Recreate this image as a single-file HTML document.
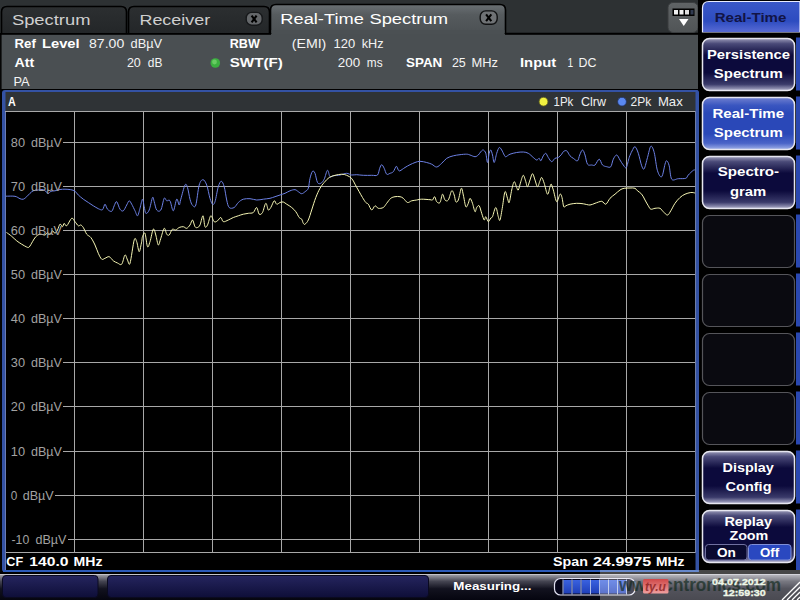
<!DOCTYPE html>
<html><head><meta charset="utf-8">
<style>
html,body{margin:0;padding:0;background:#000;width:800px;height:600px;overflow:hidden}
svg{display:block}
text{font-family:"Liberation Sans",sans-serif;white-space:pre}
</style></head><body>
<svg width="800" height="600" viewBox="0 0 800 600">
<defs>
 <linearGradient id="gTab" x1="0" y1="0" x2="0" y2="1">
  <stop offset="0" stop-color="#2c2f31"/><stop offset="1" stop-color="#232628"/>
 </linearGradient>
 <linearGradient id="gAct" x1="0" y1="0" x2="0" y2="1">
  <stop offset="0" stop-color="#6a7074"/><stop offset="0.35" stop-color="#565b5e"/><stop offset="1" stop-color="#4b5053"/>
 </linearGradient>
 <linearGradient id="gMenu" x1="0" y1="0" x2="0" y2="1">
  <stop offset="0" stop-color="#606466"/><stop offset="1" stop-color="#505456"/>
 </linearGradient>
 <linearGradient id="gNavy" x1="0" y1="0" x2="0" y2="1">
  <stop offset="0" stop-color="#9a9ab8"/><stop offset="0.1" stop-color="#4a4a78"/><stop offset="0.32" stop-color="#0c0a3c"/>
  <stop offset="0.66" stop-color="#0c0a3c"/><stop offset="0.88" stop-color="#3a3a6a"/><stop offset="1" stop-color="#b0b0cc"/>
 </linearGradient>
 <linearGradient id="gBlue" x1="0" y1="0" x2="0" y2="1">
  <stop offset="0" stop-color="#7080d0"/><stop offset="0.15" stop-color="#3a56c0"/><stop offset="0.3" stop-color="#2a48b8"/>
  <stop offset="0.7" stop-color="#2a48b8"/><stop offset="0.88" stop-color="#4a64c8"/><stop offset="1" stop-color="#a0b0e8"/>
 </linearGradient>
 <linearGradient id="gTitle" x1="0" y1="0" x2="0" y2="1">
  <stop offset="0" stop-color="#3a58c8"/><stop offset="0.6" stop-color="#2d4cc0"/><stop offset="1" stop-color="#6070d8"/>
 </linearGradient>
 <linearGradient id="gStatus" x1="0" y1="0" x2="0" y2="1">
  <stop offset="0" stop-color="#9a9aa2"/><stop offset="0.25" stop-color="#454552"/><stop offset="0.55" stop-color="#12121f"/><stop offset="1" stop-color="#05050f"/>
 </linearGradient>
 <linearGradient id="gBox" x1="0" y1="0" x2="0" y2="1">
  <stop offset="0" stop-color="#25255e"/><stop offset="1" stop-color="#0e0e38"/>
 </linearGradient>
 <linearGradient id="gProg" x1="0" y1="0" x2="0" y2="1">
  <stop offset="0" stop-color="#3a62e0"/><stop offset="1" stop-color="#1f3fb8"/>
 </linearGradient>
 <linearGradient id="gRed" x1="0" y1="0" x2="0" y2="1">
  <stop offset="0" stop-color="#d04848"/><stop offset="1" stop-color="#f0a0a0"/>
 </linearGradient>
</defs>

<!-- base -->
<rect x="0" y="0" width="800" height="600" fill="#000"/>
<rect x="0" y="0" width="698" height="34" fill="#2d3133"/>

<!-- tabs -->
<path d="M1.5,34 L1.5,12 Q1.5,6.5 7,6.5 L121,6.5 Q126.5,6.5 126.5,12 L126.5,34 Z" fill="url(#gTab)" stroke="#000" stroke-width="1.6"/>
<path d="M128.5,34 L128.5,12 Q128.5,6.5 134,6.5 L264,6.5 Q269.5,6.5 269.5,12 L269.5,34 Z" fill="url(#gTab)" stroke="#000" stroke-width="1.6"/>
<rect x="246.2" y="12.4" width="16" height="12.8" rx="5.5" fill="#64676a" stroke="#16181a" stroke-width="1.4"/>
<path d="M251.6,15.6 L256.6,22.4 M256.6,15.6 L251.6,22.4" stroke="#000" stroke-width="2.1" fill="none"/>
<line x1="506" y1="33.5" x2="698" y2="33.5" stroke="#000" stroke-width="1.6"/>
<path d="M270.5,34 L270.5,10 Q270.5,4.5 276,4.5 L500,4.5 Q505.5,4.5 505.5,10 L505.5,34 Z" fill="url(#gAct)" stroke="#000" stroke-width="1.6"/>
<rect x="271.5" y="30" width="233" height="6" fill="#4b5053"/>
<rect x="480.2" y="10.9" width="17" height="13.4" rx="5.5" fill="#6f7275" stroke="#101112" stroke-width="1.4"/>
<path d="M486.1,14.3 L491.3,21.1 M491.3,14.3 L486.1,21.1" stroke="#000" stroke-width="2.1" fill="none"/>

<!-- menu button -->
<rect x="668" y="2.5" width="30" height="30" rx="5" fill="url(#gMenu)" stroke="#3a3d3f" stroke-width="1"/>
<rect x="672.5" y="8.5" width="22" height="7.5" fill="#000"/>
<rect x="674" y="10" width="4" height="4.5" fill="#f0f0f0"/>
<rect x="679.5" y="10" width="4" height="4.5" fill="#f0f0f0"/>
<rect x="685" y="10" width="4" height="4.5" fill="#e0e0e0"/>
<rect x="690.5" y="10" width="3" height="4.5" fill="#303a50"/>
<path d="M679,19 L688.5,19 L683.75,26 Z" fill="#fff"/>

<!-- info panel -->
<rect x="0" y="34" width="698" height="55" fill="#4a4f52"/>
<rect x="0" y="33" width="1.6" height="545" fill="#050505"/>
<rect x="0" y="33" width="271" height="1.8" fill="#000"/>
<rect x="505" y="33" width="193" height="1.8" fill="#000"/>
<circle cx="215.3" cy="63" r="4.8" fill="#3cb040"/>
<circle cx="214.5" cy="62" r="2.4" fill="#7ad870" opacity="0.7"/>

<!-- graph frame -->
<rect x="2" y="90" width="697" height="482" rx="3" fill="#3452a4"/>
<rect x="5.5" y="92" width="690.5" height="19.5" fill="#2f3336"/>
<rect x="5.5" y="111" width="690.5" height="459" fill="#000"/>
<circle cx="543.5" cy="101.7" r="4.4" fill="#f0f040" stroke="#606020" stroke-width="0.8"/>
<circle cx="622" cy="101.7" r="4.4" fill="#5a88f0" stroke="#203060" stroke-width="0.8"/>

<!-- grid -->
<g stroke="#a8a8a8" stroke-width="1" fill="none">
<rect x="5.5" y="111.5" width="690" height="441"/>
<line x1="5.5" y1="112" x2="5.5" y2="570" stroke="#6a7cb4"/>
<line x1="74.5" y1="111" x2="74.5" y2="552" />
<line x1="143.5" y1="111" x2="143.5" y2="552" />
<line x1="212.5" y1="111" x2="212.5" y2="552" />
<line x1="281.5" y1="111" x2="281.5" y2="552" />
<line x1="350.5" y1="111" x2="350.5" y2="552" />
<line x1="419.5" y1="111" x2="419.5" y2="552" />
<line x1="488.5" y1="111" x2="488.5" y2="552" />
<line x1="557.5" y1="111" x2="557.5" y2="552" />
<line x1="626.5" y1="111" x2="626.5" y2="552" />
<line x1="63" y1="142.5" x2="696" y2="142.5" />
<line x1="63" y1="186.5" x2="696" y2="186.5" />
<line x1="63" y1="230.5" x2="696" y2="230.5" />
<line x1="63" y1="274.5" x2="696" y2="274.5" />
<line x1="63" y1="318.5" x2="696" y2="318.5" />
<line x1="63" y1="362.5" x2="696" y2="362.5" />
<line x1="63" y1="406.5" x2="696" y2="406.5" />
<line x1="63" y1="451.5" x2="696" y2="451.5" />
<line x1="55" y1="495.5" x2="696" y2="495.5" />
<line x1="68" y1="539.5" x2="696" y2="539.5" />
</g>

<!-- traces -->
<path d="M6.0,196.2 C7.5,196.2 12.7,195.9 15.0,196.3 C17.3,196.7 18.6,198.2 20.0,198.7 C21.4,199.2 22.2,199.5 23.3,199.2 C24.4,198.9 25.6,197.7 26.7,196.7 C27.8,195.7 28.9,194.3 30.0,193.3 C31.1,192.3 31.9,191.4 33.3,190.8 C34.7,190.2 36.6,190.2 38.3,190.0 C40.0,189.8 41.6,189.1 43.3,189.7 C45.0,190.2 47.0,193.0 48.3,193.3 C49.5,193.6 49.7,191.7 50.8,191.3 C51.9,190.9 53.5,191.1 55.0,190.8 C56.5,190.5 58.3,189.8 60.0,189.5 C61.7,189.2 63.2,189.2 65.0,189.2 C66.8,189.2 69.1,189.4 70.8,189.7 C72.5,190.0 73.8,190.3 75.0,191.2 C76.2,192.1 76.9,193.7 78.3,195.0 C79.7,196.3 81.6,197.9 83.3,199.2 C85.0,200.4 86.6,201.4 88.3,202.5 C90.0,203.6 91.6,204.8 93.3,205.8 C95.0,206.8 96.8,208.0 98.3,208.7 C99.8,209.3 101.4,210.4 102.5,209.7 C103.6,208.9 104.2,204.3 105.0,204.2 C105.8,204.1 106.4,208.0 107.5,209.2 C108.6,210.4 110.6,211.9 111.7,211.3 C112.8,210.7 113.4,207.4 114.2,205.8 C115.0,204.2 115.7,201.1 116.7,201.7 C117.7,202.3 118.9,207.7 120.0,209.2 C121.1,210.7 122.2,211.5 123.3,210.8 C124.4,210.1 125.7,206.7 126.7,205.0 C127.7,203.3 128.4,200.9 129.2,200.8 C130.0,200.7 130.7,202.5 131.7,204.2 C132.7,205.9 134.0,208.9 135.0,210.8 C136.0,212.7 136.7,216.2 137.5,215.8 C138.3,215.4 139.2,211.1 140.0,208.3 C140.8,205.5 141.8,199.5 142.5,199.2 C143.2,198.9 143.6,204.3 144.2,206.7 C144.8,209.0 145.0,212.8 145.8,213.3 C146.6,213.9 148.1,212.6 149.2,210.0 C150.3,207.4 151.7,198.9 152.5,197.5 C153.3,196.1 153.5,199.6 154.2,201.7 C154.9,203.8 155.6,208.6 156.7,210.0 C157.8,211.4 159.6,211.9 160.8,210.0 C162.1,208.1 163.2,199.8 164.2,198.3 C165.2,196.8 165.7,200.4 166.7,200.8 C167.7,201.2 168.9,199.1 170.0,200.8 C171.1,202.5 172.2,211.1 173.3,210.8 C174.4,210.5 175.7,200.2 176.7,199.2 C177.7,198.2 178.5,205.0 179.2,205.0 C179.9,205.0 179.8,202.5 180.8,199.2 C181.8,195.9 183.9,186.9 185.0,185.0 C186.1,183.1 186.7,185.1 187.5,187.5 C188.3,189.9 189.2,196.2 190.0,199.2 C190.8,202.2 191.5,204.3 192.5,205.3 C193.5,206.3 194.7,208.4 195.8,205.0 C196.9,201.6 198.0,189.2 199.2,185.0 C200.4,180.8 201.8,179.7 203.0,179.7 C204.2,179.7 205.5,181.9 206.7,185.0 C207.9,188.1 209.0,195.1 210.0,198.3 C211.0,201.5 211.7,203.6 212.5,204.2 C213.3,204.8 214.0,204.6 215.0,201.7 C216.0,198.8 217.2,190.1 218.3,186.7 C219.4,183.3 220.3,181.3 221.3,181.3 C222.3,181.3 223.3,183.6 224.2,186.7 C225.1,189.8 225.9,196.5 226.7,200.0 C227.5,203.5 227.9,206.2 229.2,207.5 C230.4,208.8 232.7,208.3 234.2,207.5 C235.7,206.7 236.8,203.9 238.3,202.5 C239.8,201.1 241.4,199.8 243.3,199.2 C245.2,198.6 247.8,198.6 250.0,198.7 C252.2,198.8 254.5,199.9 256.7,200.0 C258.9,200.1 261.1,199.5 263.3,199.2 C265.5,198.9 268.1,198.7 270.0,198.3 C271.9,197.9 273.3,197.2 275.0,196.7 C276.7,196.1 278.3,195.6 280.0,195.0 C281.7,194.4 283.3,194.0 285.0,193.3 C286.7,192.6 288.3,191.4 290.0,190.8 C291.7,190.2 293.6,189.5 295.0,189.7 C296.4,189.8 297.2,191.0 298.3,191.7 C299.4,192.4 300.6,193.7 301.7,193.7 C302.8,193.7 303.9,192.6 305.0,191.7 C306.1,190.8 307.5,190.5 308.3,188.3 C309.1,186.1 309.3,181.1 310.0,178.3 C310.7,175.5 311.7,172.1 312.5,171.3 C313.3,170.5 314.2,171.4 315.0,173.3 C315.8,175.2 316.5,180.8 317.5,182.5 C318.5,184.2 319.7,183.9 320.8,183.3 C321.9,182.8 323.1,181.4 324.2,179.2 C325.3,177.0 326.5,170.7 327.5,170.3 C328.5,169.9 329.0,175.8 330.0,176.7 C331.0,177.6 331.6,176.1 333.3,175.8 C335.0,175.5 337.8,175.4 340.0,175.0 C342.2,174.6 344.8,173.3 346.7,173.3 C348.6,173.3 350.0,174.8 351.7,175.0 C353.4,175.2 354.8,174.6 356.7,174.7 C358.6,174.8 360.8,175.2 363.3,175.3 C365.8,175.4 369.3,175.4 371.7,175.3 C374.1,175.2 376.2,176.2 377.5,175.0 C378.8,173.8 379.0,170.0 379.7,168.3 C380.4,166.6 380.9,164.7 381.7,164.7 C382.4,164.7 383.4,166.7 384.2,168.3 C385.0,169.9 385.7,173.4 386.7,174.2 C387.7,175.0 388.9,173.7 390.0,173.3 C391.1,172.9 392.2,172.9 393.3,171.7 C394.4,170.5 395.5,166.6 396.3,166.3 C397.1,166.0 397.7,169.2 398.3,170.0 C398.9,170.8 398.9,171.2 400.0,170.8 C401.1,170.4 403.3,168.5 405.0,167.5 C406.7,166.5 408.3,165.5 410.0,164.7 C411.7,163.9 413.3,163.1 415.0,162.5 C416.7,161.9 418.1,161.3 420.0,161.3 C421.9,161.3 424.8,162.0 426.7,162.5 C428.6,163.0 430.0,163.4 431.7,164.2 C433.4,164.9 435.0,167.2 436.7,167.0 C438.4,166.8 440.0,164.8 441.7,163.3 C443.4,161.9 444.8,159.6 446.7,158.3 C448.6,157.1 451.1,156.4 453.3,155.8 C455.5,155.2 457.8,155.0 460.0,154.7 C462.2,154.4 465.0,154.1 466.7,154.2 C468.4,154.2 468.6,154.6 470.0,155.0 C471.4,155.4 473.6,156.7 475.0,156.7 C476.4,156.7 477.3,155.8 478.3,155.0 C479.3,154.2 480.0,152.5 480.8,151.7 C481.6,150.9 482.5,149.7 483.3,150.0 C484.1,150.3 485.1,151.2 485.8,153.3 C486.5,155.4 486.9,162.5 487.5,162.5 C488.1,162.5 488.6,155.4 489.2,153.3 C489.8,151.2 490.2,149.7 490.8,150.0 C491.4,150.3 491.9,152.9 492.5,155.0 C493.1,157.1 493.5,162.8 494.2,162.5 C494.9,162.2 495.9,155.8 496.7,153.3 C497.5,150.8 498.4,148.1 499.2,147.5 C500.0,146.9 500.9,148.8 501.7,150.0 C502.5,151.2 503.5,153.9 504.2,155.0 C504.9,156.1 504.8,156.8 505.8,156.7 C506.8,156.6 508.2,154.9 510.0,154.2 C511.8,153.5 514.5,152.9 516.7,152.5 C518.9,152.1 521.4,151.9 523.3,152.0 C525.2,152.1 526.6,152.4 528.3,153.3 C530.0,154.2 531.9,156.4 533.3,157.5 C534.7,158.6 535.7,159.9 536.7,160.0 C537.7,160.1 538.5,158.2 539.2,158.3 C539.9,158.4 540.1,161.2 540.8,160.8 C541.5,160.4 542.5,157.1 543.3,155.8 C544.1,154.6 545.0,153.0 545.8,153.3 C546.6,153.6 547.3,156.1 548.3,157.5 C549.3,158.9 550.6,161.6 551.7,161.7 C552.8,161.8 553.9,159.0 555.0,158.3 C556.1,157.6 557.2,158.2 558.3,157.5 C559.4,156.8 560.9,155.2 561.7,154.2 C562.5,153.2 562.5,152.3 563.3,151.7 C564.1,151.1 565.6,150.1 566.7,150.8 C567.8,151.5 568.9,154.6 570.0,155.8 C571.1,157.1 572.0,157.5 573.3,158.3 C574.5,159.1 576.4,161.4 577.5,160.8 C578.6,160.2 578.9,156.8 579.7,155.0 C580.5,153.2 581.6,150.0 582.5,150.0 C583.4,150.0 584.2,152.6 585.0,155.0 C585.8,157.4 586.4,162.5 587.5,164.2 C588.6,165.9 590.5,164.9 591.7,165.0 C593.0,165.1 593.8,166.0 595.0,165.0 C596.2,164.0 598.0,159.2 599.2,159.2 C600.5,159.2 601.2,163.8 602.5,165.0 C603.8,166.2 605.3,166.4 606.7,166.7 C608.1,167.0 609.7,167.9 610.8,166.7 C611.9,165.4 612.3,161.1 613.3,159.2 C614.3,157.2 615.6,154.9 616.7,155.0 C617.8,155.1 618.9,158.3 620.0,160.0 C621.1,161.7 622.2,163.8 623.3,165.0 C624.3,166.2 625.3,168.8 626.3,167.5 C627.3,166.2 628.2,160.2 629.2,157.5 C630.2,154.8 631.0,152.8 632.0,151.0 C633.0,149.2 634.0,146.3 635.0,146.7 C636.0,147.1 637.2,150.1 638.3,153.3 C639.4,156.5 640.7,163.2 641.7,165.8 C642.7,168.4 643.2,170.1 644.2,168.7 C645.2,167.3 646.4,161.2 647.5,157.5 C648.6,153.8 649.7,147.1 650.8,146.3 C651.9,145.5 653.1,148.4 654.2,152.5 C655.3,156.6 656.2,166.8 657.5,170.8 C658.8,174.8 660.5,177.8 661.7,176.7 C663.0,175.6 664.2,166.8 665.0,164.2 C665.8,161.5 666.0,160.5 666.7,160.8 C667.4,161.1 668.4,162.7 669.2,165.8 C670.0,168.9 670.2,177.0 671.7,179.2 C673.2,181.3 675.9,178.8 678.3,178.7 C680.6,178.5 684.1,178.9 685.8,178.3 C687.5,177.7 687.0,176.3 688.3,175.0 C689.5,173.7 692.2,171.1 693.3,170.3 C694.4,169.5 694.7,170.1 695.0,170.0" fill="none" stroke="#6c80e4" stroke-width="1" stroke-linejoin="round"/>
<path d="M6.5,232.5 C7.4,233.1 10.0,234.9 11.7,236.3 C13.4,237.7 15.0,239.5 16.7,240.8 C18.4,242.1 20.0,243.2 21.7,244.2 C23.4,245.2 25.4,246.5 26.7,247.0 C27.9,247.5 28.2,247.9 29.2,247.0 C30.2,246.1 31.4,243.4 32.5,241.7 C33.6,240.0 34.5,237.9 35.8,236.7 C37.0,235.4 38.5,234.5 40.0,234.2 C41.5,233.9 43.8,235.3 45.0,235.0 C46.2,234.7 46.7,232.6 47.5,232.5 C48.3,232.4 49.2,234.5 50.0,234.2 C50.8,233.9 51.7,231.0 52.5,230.8 C53.3,230.7 54.2,233.4 55.0,233.3 C55.8,233.2 56.7,231.5 57.5,230.0 C58.3,228.5 59.2,224.8 60.0,224.2 C60.8,223.6 61.8,226.8 62.5,226.7 C63.2,226.5 63.5,223.5 64.2,223.3 C64.9,223.2 65.5,226.6 66.7,225.8 C68.0,225.0 70.3,219.0 71.7,218.3 C73.1,217.6 73.9,220.4 75.0,221.7 C76.1,222.9 77.3,225.2 78.3,225.8 C79.3,226.4 80.0,224.7 80.8,225.0 C81.6,225.3 82.3,226.0 83.3,227.5 C84.3,229.0 85.5,232.5 86.7,234.2 C88.0,235.9 89.4,235.7 90.8,237.5 C92.2,239.3 93.8,242.4 95.0,245.0 C96.2,247.6 97.2,250.9 98.3,253.3 C99.4,255.7 100.6,258.4 101.7,259.2 C102.8,260.0 103.8,258.7 105.0,258.3 C106.2,257.9 107.8,256.3 109.2,256.7 C110.6,257.1 111.9,259.8 113.3,260.8 C114.7,261.9 116.1,262.4 117.5,263.0 C118.9,263.6 120.5,265.5 121.7,264.2 C123.0,262.9 124.0,255.7 125.0,255.0 C126.0,254.3 126.7,258.6 127.5,260.0 C128.3,261.4 128.9,266.6 130.0,263.3 C131.1,260.0 133.1,243.6 134.2,240.0 C135.3,236.4 135.9,239.8 136.7,241.7 C137.5,243.6 138.4,251.7 139.2,251.7 C140.0,251.7 141.1,244.2 141.7,241.7 C142.2,239.2 141.9,238.1 142.5,236.7 C143.1,235.3 144.2,231.6 145.0,233.3 C145.8,235.0 146.7,245.3 147.5,246.7 C148.3,248.1 149.0,244.6 150.0,241.7 C151.0,238.8 152.3,230.3 153.3,229.2 C154.3,228.1 155.0,232.4 155.8,235.0 C156.6,237.6 157.5,244.4 158.3,245.0 C159.1,245.6 159.8,241.1 160.8,238.3 C161.8,235.5 163.2,229.0 164.2,228.3 C165.2,227.6 165.9,233.1 166.7,234.2 C167.5,235.3 168.4,235.7 169.2,235.0 C170.0,234.3 171.0,231.0 171.7,230.0 C172.4,229.0 172.6,229.2 173.3,229.2 C174.0,229.2 174.8,230.3 175.8,230.0 C176.8,229.7 177.9,228.1 179.2,227.5 C180.4,226.9 182.1,226.6 183.3,226.7 C184.6,226.8 185.6,228.6 186.7,228.3 C187.8,228.0 189.0,226.4 190.0,225.0 C191.0,223.6 191.7,219.7 192.5,220.0 C193.3,220.3 194.2,225.4 195.0,226.7 C195.8,227.9 196.7,227.8 197.5,227.5 C198.3,227.2 199.1,226.9 200.0,225.0 C200.9,223.1 202.2,215.5 203.0,215.8 C203.8,216.1 204.2,225.2 205.0,226.7 C205.8,228.2 206.5,226.8 207.5,225.0 C208.5,223.2 209.7,216.4 210.8,215.8 C211.9,215.2 213.1,220.9 214.2,221.7 C215.3,222.5 216.4,221.5 217.5,220.8 C218.6,220.1 219.8,217.3 220.8,217.5 C221.8,217.7 222.1,221.3 223.3,221.7 C224.6,222.1 226.6,220.7 228.3,220.0 C230.0,219.3 231.6,218.2 233.3,217.5 C235.0,216.8 236.6,216.4 238.3,215.8 C240.0,215.2 241.6,214.6 243.3,214.2 C245.0,213.8 246.6,213.6 248.3,213.3 C250.0,213.0 251.9,213.5 253.3,212.5 C254.7,211.5 255.7,207.2 256.7,207.5 C257.7,207.8 258.2,213.4 259.2,214.2 C260.2,215.0 261.4,214.3 262.5,212.5 C263.6,210.7 264.8,203.7 265.8,203.3 C266.8,202.9 267.5,209.3 268.3,210.0 C269.1,210.7 269.8,209.0 270.8,207.5 C271.8,206.0 273.2,201.4 274.2,200.8 C275.2,200.2 275.7,203.9 276.7,204.2 C277.7,204.5 278.9,202.9 280.0,202.5 C281.1,202.1 282.2,201.7 283.3,202.0 C284.4,202.3 285.3,203.3 286.7,204.2 C288.1,205.1 290.2,206.2 291.7,207.5 C293.2,208.8 294.6,210.0 295.8,211.7 C297.1,213.4 298.2,216.2 299.2,217.5 C300.2,218.8 301.0,218.2 301.7,219.2 C302.4,220.2 302.8,222.5 303.3,223.3 C303.9,224.1 304.2,224.8 305.0,224.2 C305.8,223.6 307.2,222.4 308.3,220.0 C309.4,217.6 310.4,213.8 311.7,210.0 C312.9,206.2 314.4,201.1 315.8,197.5 C317.2,193.9 318.6,190.8 320.0,188.3 C321.4,185.8 322.7,184.3 324.2,182.5 C325.7,180.7 327.4,178.7 329.2,177.5 C331.0,176.3 332.9,175.9 335.0,175.3 C337.1,174.8 339.8,174.2 341.7,174.2 C343.6,174.2 345.0,174.6 346.7,175.3 C348.4,176.0 350.3,177.0 351.7,178.5 C353.1,180.0 353.8,182.0 355.0,184.2 C356.2,186.4 357.9,189.5 359.2,191.7 C360.4,193.9 361.4,195.7 362.5,197.5 C363.6,199.3 364.8,201.4 365.8,202.5 C366.8,203.6 367.3,202.9 368.3,204.2 C369.3,205.4 370.6,209.7 371.7,210.0 C372.8,210.3 373.9,206.1 375.0,205.8 C376.1,205.5 376.9,208.0 378.3,208.3 C379.7,208.6 381.9,208.3 383.3,207.5 C384.7,206.7 385.4,204.8 386.7,203.3 C387.9,201.8 389.4,199.4 390.8,198.3 C392.2,197.2 393.5,197.0 395.0,196.7 C396.5,196.4 398.6,196.4 400.0,196.7 C401.4,197.0 402.1,197.3 403.3,198.3 C404.6,199.3 406.1,202.1 407.5,202.5 C408.9,202.9 410.2,201.2 411.7,200.8 C413.2,200.4 415.0,200.3 416.7,200.0 C418.4,199.7 419.5,199.2 421.7,199.2 C423.9,199.1 428.2,199.6 430.0,199.7 C431.8,199.8 431.7,200.5 432.5,200.0 C433.3,199.5 434.0,196.4 434.7,196.7 C435.4,197.0 435.8,200.7 436.7,201.7 C437.6,202.7 439.0,203.8 440.0,202.5 C441.0,201.2 441.7,194.6 442.5,194.2 C443.3,193.8 444.0,199.0 445.0,200.0 C446.0,201.0 447.2,201.5 448.3,200.0 C449.4,198.5 450.7,191.6 451.7,190.8 C452.7,190.0 453.5,193.2 454.2,195.0 C454.9,196.8 455.1,200.9 455.8,201.7 C456.5,202.5 457.4,202.2 458.3,200.0 C459.2,197.8 460.5,189.1 461.3,188.3 C462.1,187.5 462.6,191.9 463.3,195.0 C464.1,198.1 465.0,205.3 465.8,206.7 C466.6,208.1 467.6,204.7 468.3,203.3 C469.0,201.9 469.3,198.3 470.0,198.3 C470.7,198.3 471.7,201.1 472.5,203.3 C473.3,205.5 474.3,211.0 475.0,211.7 C475.7,212.4 476.0,208.5 476.7,207.5 C477.4,206.5 478.4,204.8 479.2,205.8 C480.0,206.8 480.9,210.9 481.7,213.3 C482.5,215.7 483.5,219.4 484.2,220.0 C484.9,220.6 485.1,216.4 485.8,216.7 C486.5,217.0 487.5,221.5 488.3,221.7 C489.1,221.9 490.1,218.8 490.8,218.0 C491.5,217.2 491.7,218.4 492.5,216.7 C493.3,214.9 494.8,207.5 495.8,207.5 C496.8,207.5 497.6,214.6 498.3,216.7 C499.0,218.8 499.3,221.7 500.0,220.0 C500.7,218.3 501.7,211.4 502.5,206.7 C503.3,202.0 504.2,193.1 505.0,191.7 C505.8,190.3 506.8,196.5 507.5,198.3 C508.2,200.1 508.5,203.9 509.2,202.5 C509.9,201.1 510.9,193.5 511.7,190.0 C512.5,186.5 513.4,182.1 514.2,181.7 C515.0,181.3 516.0,186.1 516.7,187.5 C517.4,188.9 517.6,191.0 518.3,190.0 C519.0,189.0 520.0,184.1 520.8,181.7 C521.6,179.2 522.5,175.3 523.3,175.3 C524.1,175.3 525.1,179.8 525.8,181.7 C526.5,183.6 526.8,187.0 527.5,186.7 C528.2,186.4 529.2,182.2 530.0,180.0 C530.8,177.8 531.7,173.7 532.5,173.7 C533.3,173.7 534.2,177.8 535.0,180.0 C535.8,182.2 536.7,186.6 537.5,186.7 C538.3,186.8 539.3,182.3 540.0,180.8 C540.7,179.3 541.0,177.1 541.7,177.5 C542.4,177.9 543.2,180.5 544.2,183.3 C545.2,186.1 546.5,193.6 547.5,194.2 C548.5,194.8 549.4,188.4 550.0,186.7 C550.6,185.0 550.8,183.6 551.3,184.2 C551.8,184.8 552.4,187.1 553.3,190.0 C554.2,192.9 555.6,201.0 556.7,201.7 C557.8,202.4 559.1,194.9 560.0,194.2 C560.9,193.5 561.4,195.4 562.0,197.5 C562.6,199.6 563.1,205.3 563.7,206.7 C564.3,208.1 564.8,206.2 565.8,205.8 C566.8,205.4 568.2,204.6 570.0,204.2 C571.8,203.8 574.5,203.4 576.7,203.3 C578.9,203.2 581.1,203.5 583.3,203.8 C585.5,204.1 588.0,205.1 590.0,205.0 C592.0,204.9 593.0,203.9 595.0,203.3 C597.0,202.7 599.9,201.2 601.7,201.3 C603.5,201.5 604.4,204.7 605.8,204.2 C607.2,203.7 608.5,200.0 610.0,198.3 C611.5,196.6 613.3,195.6 615.0,194.2 C616.7,192.8 618.5,191.0 620.0,190.0 C621.5,189.0 622.5,188.6 624.2,188.3 C625.9,188.0 628.2,188.0 630.0,188.0 C631.8,188.0 633.8,187.8 635.0,188.3 C636.2,188.8 636.4,189.8 637.5,190.8 C638.6,191.8 640.5,192.7 641.7,194.2 C643.0,195.7 643.9,198.1 645.0,200.0 C646.1,201.9 647.3,204.3 648.3,205.8 C649.3,207.3 649.7,208.8 650.8,209.2 C651.9,209.6 653.5,208.5 655.0,208.3 C656.5,208.2 658.6,207.7 660.0,208.3 C661.4,208.9 662.0,210.6 663.3,211.7 C664.5,212.8 666.2,215.2 667.5,215.0 C668.8,214.8 669.5,212.8 670.8,210.8 C672.0,208.9 673.5,205.5 675.0,203.3 C676.5,201.1 678.3,199.0 680.0,197.5 C681.7,196.0 683.2,195.0 685.0,194.2 C686.8,193.4 689.1,192.7 690.8,192.5 C692.5,192.3 694.3,192.9 695.0,193.0" fill="none" stroke="#f6f6b4" stroke-width="1" stroke-linejoin="round"/>

<!-- softkeys -->
<rect x="698" y="0" width="102" height="572" fill="#000"/><path d="M695.5,90 L696.5,90 Q699,90 699,92.5 L699,572 L695.5,572 Z" fill="#3452a4"/>
<rect x="796" y="33" width="4" height="537" fill="#2a48b0"/>
<g fill="#000">
 <rect x="699" y="90.5" width="101" height="6"/>
 <rect x="699" y="149.5" width="101" height="6"/>
 <rect x="699" y="208.5" width="101" height="6"/>
 <rect x="699" y="267.5" width="101" height="6"/>
 <rect x="699" y="326.5" width="101" height="6"/>
 <rect x="699" y="385.5" width="101" height="6"/>
 <rect x="699" y="444.5" width="101" height="6"/>
 <rect x="699" y="503.5" width="101" height="6"/>
</g>
<path d="M702.5,34 L702.5,8 Q702.5,1.5 709,1.5 L800,1.5 L800,32.5 L702.5,32.5 Z" fill="url(#gTitle)" stroke="#e8ecff" stroke-width="1.2"/>
<rect x="699" y="32.5" width="101" height="5" fill="#000"/>
<rect x="702.5" y="38.5" width="92" height="52" rx="7" fill="url(#gNavy)" stroke="#e6e6f0" stroke-width="1.5"/>
<rect x="702.5" y="97.5" width="92" height="52" rx="7" fill="url(#gBlue)" stroke="#e6e6f0" stroke-width="1.5"/>
<rect x="702.5" y="156.5" width="92" height="52" rx="7" fill="url(#gNavy)" stroke="#e6e6f0" stroke-width="1.5"/>
<rect x="702.5" y="215.5" width="92" height="52" rx="7" fill="#0a0a10" stroke="#55555a" stroke-width="1.2"/>
<rect x="702.5" y="274.5" width="92" height="52" rx="7" fill="#0a0a10" stroke="#55555a" stroke-width="1.2"/>
<rect x="702.5" y="333.5" width="92" height="52" rx="7" fill="#0a0a10" stroke="#55555a" stroke-width="1.2"/>
<rect x="702.5" y="392.5" width="92" height="52" rx="7" fill="#0a0a10" stroke="#55555a" stroke-width="1.2"/>
<rect x="702.5" y="451.5" width="92" height="52" rx="7" fill="url(#gNavy)" stroke="#e6e6f0" stroke-width="1.5"/>
<rect x="702.5" y="510.5" width="92" height="52" rx="7" fill="url(#gNavy)" stroke="#e6e6f0" stroke-width="1.5"/>
<rect x="705.5" y="544.5" width="41.5" height="15.5" rx="3" fill="#0a0a30" stroke="#7070a0" stroke-width="1"/>
<rect x="748.5" y="544.5" width="42.5" height="15.5" rx="3" fill="#2a48c0" stroke="#8090d8" stroke-width="1"/>

<!-- status bar -->
<rect x="0" y="572" width="800" height="28" fill="#000"/>
<rect x="3" y="570" width="695" height="2" fill="#2c5ab8"/>
<rect x="0" y="574" width="800" height="1.2" fill="#c4c4cc"/>
<rect x="0" y="575" width="800" height="25" fill="url(#gStatus)"/>
<rect x="2.5" y="575.5" width="95.5" height="22" rx="3.5" fill="url(#gBox)" stroke="#0a0a20" stroke-width="1"/>
<rect x="107.5" y="575.5" width="321" height="22" rx="3.5" fill="url(#gBox)" stroke="#0a0a20" stroke-width="1"/>
<rect x="554.5" y="578.5" width="80.5" height="16.5" rx="6" fill="#05051a" stroke="#e0e0f0" stroke-width="1.2"/>
<g fill="url(#gProg)">
 <rect x="563.5" y="580" width="8" height="13.5"/>
 <rect x="572.5" y="580" width="8" height="13.5"/>
 <rect x="581.5" y="580" width="8.5" height="13.5"/>
 <rect x="591" y="580" width="8" height="13.5"/>
 <rect x="600" y="580" width="8" height="13.5"/>
 <rect x="609" y="580" width="8" height="13.5"/>
 <rect x="618" y="580" width="8" height="13.5"/>
</g>
<g stroke="#c0d0ff" stroke-width="0.9">
 <line x1="563" y1="579.5" x2="563" y2="594.5"/><line x1="572" y1="579.5" x2="572" y2="594.5"/>
 <line x1="581" y1="579.5" x2="581" y2="594.5"/><line x1="590.5" y1="579.5" x2="590.5" y2="594.5"/>
 <line x1="599.5" y1="579.5" x2="599.5" y2="594.5"/><line x1="608.5" y1="579.5" x2="608.5" y2="594.5"/>
 <line x1="617.5" y1="579.5" x2="617.5" y2="594.5"/><line x1="626.5" y1="579.5" x2="626.5" y2="594.5"/>
</g>
<g stroke="#ffffff" stroke-width="1.3">
 <line x1="782" y1="600" x2="800" y2="582"/><line x1="787" y1="600" x2="800" y2="587"/>
 <line x1="792" y1="600" x2="800" y2="592"/><line x1="797" y1="600" x2="800" y2="597"/>
</g>
<!-- watermark overlay -->
<rect x="600" y="570" width="200" height="30" fill="#ffffff" opacity="0.28"/>
<text x="619" y="591" font-size="19" font-weight="bold" fill="#10281c" opacity="0.65" textLength="162" lengthAdjust="spacingAndGlyphs">www.cntronics.com</text>
<rect x="643" y="579" width="25.5" height="14.5" rx="1.5" fill="url(#gRed)"/>
<text x="645" y="591" font-size="13" font-weight="bold" font-style="italic" fill="#8a2020" opacity="0.8" textLength="21" lengthAdjust="spacingAndGlyphs">ty.u</text>

<text transform="translate(14.50,48) scale(1.0177,1)" font-size="13" font-weight="bold" fill="#ffffff">Ref</text>
<text transform="translate(42.00,48) scale(1.1339,1)" font-size="13" font-weight="bold" fill="#ffffff">Level</text>
<text transform="translate(89.00,48) scale(1.0835,1)" font-size="13" font-weight="normal" fill="#f4f4f4">87.00</text>
<text transform="translate(130.50,48) scale(0.9879,1)" font-size="13" font-weight="normal" fill="#f4f4f4">dBµV</text>
<text transform="translate(229.75,48) scale(0.9708,1)" font-size="13" font-weight="bold" fill="#ffffff">RBW</text>
<text transform="translate(291.75,48) scale(1.0893,1)" font-size="13" font-weight="normal" fill="#f4f4f4">(EMI)</text>
<text transform="translate(333.60,48) scale(0.9972,1)" font-size="13" font-weight="normal" fill="#f4f4f4">120</text>
<text transform="translate(361.75,48) scale(0.9754,1)" font-size="13" font-weight="normal" fill="#f4f4f4">kHz</text>
<text transform="translate(14.50,67) scale(1.0952,1)" font-size="13" font-weight="bold" fill="#ffffff">Att</text>
<text transform="translate(126.90,67) scale(0.9628,1)" font-size="13" font-weight="normal" fill="#f4f4f4">20</text>
<text transform="translate(147.80,67) scale(0.9192,1)" font-size="13" font-weight="normal" fill="#f4f4f4">dB</text>
<text transform="translate(229.75,67) scale(1.1683,1)" font-size="13" font-weight="bold" fill="#ffffff">SWT(F)</text>
<text transform="translate(337.80,67) scale(1.0298,1)" font-size="13" font-weight="normal" fill="#f4f4f4">200</text>
<text transform="translate(366.80,67) scale(0.9086,1)" font-size="13" font-weight="normal" fill="#f4f4f4">ms</text>
<text transform="translate(406.00,67) scale(1.0326,1)" font-size="13" font-weight="bold" fill="#ffffff">SPAN</text>
<text transform="translate(451.90,67) scale(0.9628,1)" font-size="13" font-weight="normal" fill="#f4f4f4">25</text>
<text transform="translate(471.51,67) scale(0.9914,1)" font-size="13" font-weight="normal" fill="#f4f4f4">MHz</text>
<text transform="translate(520.00,67) scale(1.1377,1)" font-size="13" font-weight="bold" fill="#ffffff">Input</text>
<text transform="translate(567.50,67) scale(0.7857,1)" font-size="13" font-weight="normal" fill="#f4f4f4">1</text>
<text transform="translate(578.45,67) scale(0.9547,1)" font-size="13" font-weight="normal" fill="#f4f4f4">DC</text>
<text transform="translate(13.51,86) scale(0.9869,1)" font-size="13" font-weight="normal" fill="#f4f4f4">PA</text>
<text transform="translate(11.90,25) scale(1.1847,1)" font-size="15.5" font-weight="normal" fill="#cfcfcf">Spectrum</text>
<text transform="translate(139.44,25) scale(1.1567,1)" font-size="15.5" font-weight="normal" fill="#cfcfcf">Receiver</text>
<text transform="translate(280.32,24) scale(1.1777,1)" font-size="15.5" font-weight="normal" fill="#ffffff">Real-Time</text>
<text transform="translate(369.40,24) scale(1.1847,1)" font-size="15.5" font-weight="normal" fill="#ffffff">Spectrum</text>
<text transform="translate(714.75,22) scale(1.1847,1)" font-size="12.7" font-weight="bold" fill="#121446">Real-Time</text>
<text transform="translate(706.90,58.6) scale(1.1674,1)" font-size="12.7" font-weight="bold" fill="#ffffff">Persistence</text>
<text transform="translate(713.75,77.75) scale(1.1805,1)" font-size="12.7" font-weight="bold" fill="#ffffff">Spectrum</text>
<text transform="translate(712.50,118) scale(1.1847,1)" font-size="12.7" font-weight="bold" fill="#ffffff">Real-Time</text>
<text transform="translate(713.75,136.6) scale(1.1805,1)" font-size="12.7" font-weight="bold" fill="#ffffff">Spectrum</text>
<text transform="translate(717.75,176.25) scale(1.1905,1)" font-size="12.7" font-weight="bold" fill="#ffffff">Spectro-</text>
<text transform="translate(730.00,195.6) scale(1.1710,1)" font-size="12.7" font-weight="bold" fill="#ffffff">gram</text>
<text transform="translate(722.50,472) scale(1.1370,1)" font-size="12.7" font-weight="bold" fill="#ffffff">Display</text>
<text transform="translate(725.60,490.6) scale(1.1418,1)" font-size="12.7" font-weight="bold" fill="#ffffff">Config</text>
<text transform="translate(724.40,525.5) scale(1.1432,1)" font-size="12.7" font-weight="bold" fill="#ffffff">Replay</text>
<text transform="translate(729.40,540) scale(1.1270,1)" font-size="12.7" font-weight="bold" fill="#ffffff">Zoom</text>
<text transform="translate(716.90,557.4) scale(1.0730,1)" font-size="12.7" font-weight="bold" fill="#ffffff">On</text>
<text transform="translate(760.00,557.4) scale(1.0475,1)" font-size="12.7" font-weight="bold" fill="#ffffff">Off</text>
<text transform="translate(8.00,106) scale(0.8250,1)" font-size="13" font-weight="bold" fill="#ffffff">A</text>
<text transform="translate(553.50,106) scale(0.9197,1)" font-size="12.5" font-weight="normal" fill="#f0f0f0">1Pk</text>
<text transform="translate(581.00,106) scale(1.0013,1)" font-size="12.5" font-weight="normal" fill="#f0f0f0">Clrw</text>
<text transform="translate(630.50,106) scale(0.9646,1)" font-size="12.5" font-weight="normal" fill="#f0f0f0">2Pk</text>
<text transform="translate(657.95,106) scale(1.0486,1)" font-size="12.5" font-weight="normal" fill="#f0f0f0">Max</text>
<text transform="translate(10.85,146.6) scale(0.9874,1)" font-size="13" font-weight="normal" fill="#a2a2a2">80</text>
<text transform="translate(30.90,146.6) scale(0.9663,1)" font-size="13" font-weight="normal" fill="#a2a2a2">dBµV</text>
<text transform="translate(10.85,190.6) scale(0.9874,1)" font-size="13" font-weight="normal" fill="#a2a2a2">70</text>
<text transform="translate(30.90,190.6) scale(0.9663,1)" font-size="13" font-weight="normal" fill="#a2a2a2">dBµV</text>
<text transform="translate(10.85,234.6) scale(0.9874,1)" font-size="13" font-weight="normal" fill="#a2a2a2">60</text>
<text transform="translate(30.90,234.6) scale(0.9663,1)" font-size="13" font-weight="normal" fill="#a2a2a2">dBµV</text>
<text transform="translate(10.85,278.6) scale(0.9874,1)" font-size="13" font-weight="normal" fill="#a2a2a2">50</text>
<text transform="translate(30.90,278.6) scale(0.9663,1)" font-size="13" font-weight="normal" fill="#a2a2a2">dBµV</text>
<text transform="translate(10.85,322.6) scale(0.9874,1)" font-size="13" font-weight="normal" fill="#a2a2a2">40</text>
<text transform="translate(30.90,322.6) scale(0.9663,1)" font-size="13" font-weight="normal" fill="#a2a2a2">dBµV</text>
<text transform="translate(10.85,366.6) scale(0.9874,1)" font-size="13" font-weight="normal" fill="#a2a2a2">30</text>
<text transform="translate(30.90,366.6) scale(0.9663,1)" font-size="13" font-weight="normal" fill="#a2a2a2">dBµV</text>
<text transform="translate(10.85,410.6) scale(0.9874,1)" font-size="13" font-weight="normal" fill="#a2a2a2">20</text>
<text transform="translate(30.90,410.6) scale(0.9663,1)" font-size="13" font-weight="normal" fill="#a2a2a2">dBµV</text>
<text transform="translate(10.85,455.6) scale(0.9874,1)" font-size="13" font-weight="normal" fill="#a2a2a2">10</text>
<text transform="translate(30.90,455.6) scale(0.9663,1)" font-size="13" font-weight="normal" fill="#a2a2a2">dBµV</text>
<text transform="translate(10.85,499.6) scale(0.9071,1)" font-size="13" font-weight="normal" fill="#a2a2a2">0</text>
<text transform="translate(22.70,499.6) scale(0.9663,1)" font-size="13" font-weight="normal" fill="#a2a2a2">dBµV</text>
<text transform="translate(11.50,543.6) scale(0.9429,1)" font-size="13" font-weight="normal" fill="#a2a2a2">-10</text>
<text transform="translate(35.40,543.6) scale(0.9663,1)" font-size="13" font-weight="normal" fill="#a2a2a2">dBµV</text>
<text transform="translate(6.30,566) scale(0.9719,1)" font-size="13" font-weight="bold" fill="#ffffff">CF</text>
<text transform="translate(29.20,566) scale(1.2074,1)" font-size="13" font-weight="bold" fill="#ffffff">140.0</text>
<text transform="translate(73.50,566) scale(1.0839,1)" font-size="13" font-weight="bold" fill="#ffffff">MHz</text>
<text transform="translate(553.00,566) scale(1.0992,1)" font-size="13" font-weight="bold" fill="#ffffff">Span</text>
<text transform="translate(593.00,566) scale(1.2403,1)" font-size="13" font-weight="bold" fill="#ffffff">24.9975</text>
<text transform="translate(656.00,566) scale(1.0655,1)" font-size="13" font-weight="bold" fill="#ffffff">MHz</text>
<text transform="translate(453.30,590) scale(1.1644,1)" font-size="11.5" font-weight="bold" fill="#ffffff">Measuring...</text>
<text transform="translate(712.00,585) scale(1.1200,1)" font-size="9.6" font-weight="bold" fill="#eef8e8" stroke="#eef8e8" stroke-width="0.35">04.07.2012</text>
<text transform="translate(722.90,596) scale(1.1164,1)" font-size="9.6" font-weight="bold" fill="#eef8e8" stroke="#eef8e8" stroke-width="0.35">12:59:30</text>

</svg>
</body></html>
